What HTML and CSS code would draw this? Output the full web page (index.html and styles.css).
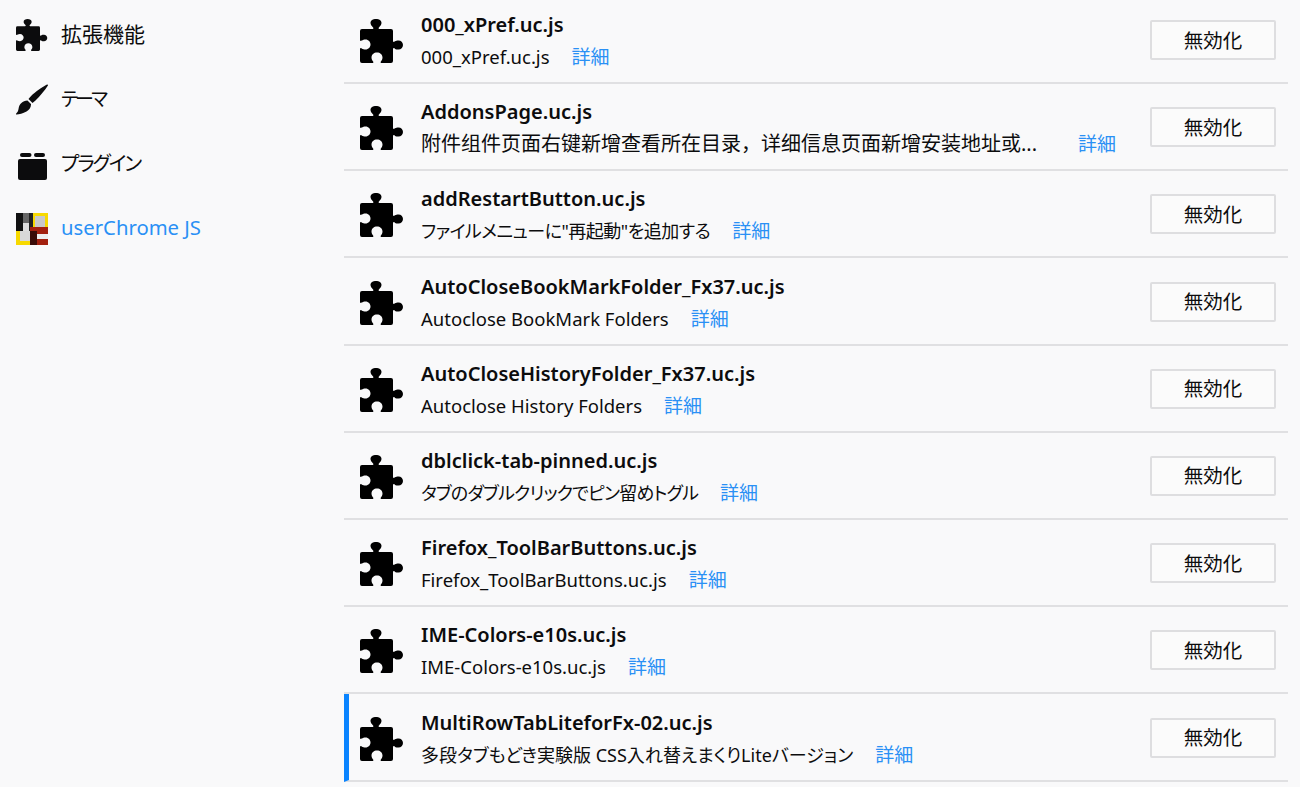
FILE: index.html
```html
<!DOCTYPE html>
<html lang="ja">
<head>
    <meta charset="UTF-8">
    <title>アドオンマネージャー</title>
    <link rel="stylesheet" href="styles.css">
</head>
<body>
    <svg class="defs" width="0" height="0">
        <symbol id="puzzle" viewBox="0 0 44 44">
            <path d="M2 10H12.500c.8 0 1.200-.8.6-1.600C11.500 7 10.500 5.500 10.500 3.800 10.500 1.500 13 0 16 0s5.500 1.500 5.500 3.800c0 1.700-1 3.200-2.600 4.600-.6.8-.2 1.600.6 1.600H31a2 2 0 0 1 2 2V22c0 .8.8 1.200 1.600.6 1.400-1.100 2.400-1.100 3.900-1.100 2.500 0 4.500 2 4.500 4.500s-2 4.500-4.500 4.500c-1.500 0-2.500 0-3.900-1.100-.8-.6-1.600-.2-1.600.6V42a2 2 0 0 1-2 2H21.500c-.8 0-1.200-.8-.6-1.600 1.100-1.400 1.600-2.400 1.600-3.900 0-3-2.500-5-5.500-5s-5.500 2-5.500 5c0 1.500.5 2.500 1.600 3.900.6.8.2 1.600-.6 1.600H2a2 2 0 0 1-2-2V30c0-.8.8-1.200 1.600-.6 1.400.6 2.400 1.100 3.900 1.100 3 0 5-2.500 5-5s-2-5-5-5c-1.500 0-2.500.5-3.900 1.100C.8 22.200 0 21.800 0 21V12a2 2 0 0 1 2-2Z"/>
        </symbol>
    </svg>

    <nav class="sidebar">
        <a class="cat">
            <svg class="cat-icon"><use href="#puzzle"/></svg>
            <span>拡張機能</span>
        </a>
        <a class="cat">
            <svg class="cat-icon" viewBox="0 0 32 32">
                <path d="M31 .5c.6-.4 1.300.3.900.9C29 6 24 12 19.500 16.500c-1 1-2 1.800-3 2.500l-4-4c.8-1 1.600-2 2.600-3C19.500 7.500 26.500 3 31 .5Z"/>
                <path d="M11.500 16.500l3.500 3.500c.2 3.500-2 6-4.500 7.500C7 29.500 3 30.500 .5 30.500c-.6 0-.7-.6-.3-1 1.800-1.500 2-3 2.500-5.500.6-3.500 3.800-7.500 8.800-7.500Z"/>
            </svg>
            <span class="kana kana-tight">テーマ</span>
        </a>
        <a class="cat">
            <svg class="cat-icon" viewBox="0 0 32 32">
                <rect x="4" y="5" width="11.500" height="4" rx="2"/>
                <rect x="18" y="5" width="11" height="4" rx="2"/>
                <rect x="2" y="11" width="29" height="21" rx="2"/>
            </svg>
            <span class="kana">プラグイン</span>
        </a>
        <a class="cat cat-active">
            <svg class="cat-icon" viewBox="0 0 32 32">
                <rect width="32" height="32" fill="#f7d900"/>
                <rect x="0" y="0" width="7" height="18" fill="#111"/>
                <rect x="7" y="0" width="6" height="10" fill="#666"/>
                <rect x="7" y="10" width="6" height="8" fill="#ddd"/>
                <rect x="13" y="0" width="4" height="24" fill="#222"/>
                <rect x="19" y="3" width="10" height="12" fill="#c9c9c9"/>
                <rect x="4" y="18" width="10" height="10" fill="#d8d8d8"/>
                <rect x="14" y="14" width="18" height="18" fill="#a3200f"/>
                <rect x="14" y="18" width="7" height="14" fill="#3a0c08"/>
                <rect x="21" y="21" width="11" height="5" fill="#eee"/>
            </svg>
            <span>userChrome JS</span>
        </a>
    </nav>

    <main class="list">
        <div class="addon">
            <svg class="addon-icon"><use href="#puzzle"/></svg>
            <div class="addon-body">
                <div class="addon-name">000_xPref.uc.js</div>
                <div class="addon-line"><span class="addon-desc">000_xPref.uc.js</span><a class="more">詳細</a></div>
            </div>
            <button class="btn">無効化</button>
        </div>
        <div class="addon">
            <svg class="addon-icon"><use href="#puzzle"/></svg>
            <div class="addon-body">
                <div class="addon-name">AddonsPage.uc.js</div>
                <div class="addon-line"><span class="addon-desc addon-desc-long">附件组件页面右键新增查看所在目录，详细信息页面新增安装地址或...</span><a class="more">詳細</a></div>
            </div>
            <button class="btn">無効化</button>
        </div>
        <div class="addon">
            <svg class="addon-icon"><use href="#puzzle"/></svg>
            <div class="addon-body">
                <div class="addon-name">addRestartButton.uc.js</div>
                <div class="addon-line"><span class="addon-desc kana">ファイルメニューに"再起動"を追加する</span><a class="more">詳細</a></div>
            </div>
            <button class="btn">無効化</button>
        </div>
        <div class="addon">
            <svg class="addon-icon"><use href="#puzzle"/></svg>
            <div class="addon-body">
                <div class="addon-name">AutoCloseBookMarkFolder_Fx37.uc.js</div>
                <div class="addon-line"><span class="addon-desc">Autoclose BookMark Folders</span><a class="more">詳細</a></div>
            </div>
            <button class="btn">無効化</button>
        </div>
        <div class="addon">
            <svg class="addon-icon"><use href="#puzzle"/></svg>
            <div class="addon-body">
                <div class="addon-name">AutoCloseHistoryFolder_Fx37.uc.js</div>
                <div class="addon-line"><span class="addon-desc">Autoclose History Folders</span><a class="more">詳細</a></div>
            </div>
            <button class="btn">無効化</button>
        </div>
        <div class="addon">
            <svg class="addon-icon"><use href="#puzzle"/></svg>
            <div class="addon-body">
                <div class="addon-name">dblclick-tab-pinned.uc.js</div>
                <div class="addon-line"><span class="addon-desc kana kana-tight">タブのダブルクリックでピン留めトグル</span><a class="more">詳細</a></div>
            </div>
            <button class="btn">無効化</button>
        </div>
        <div class="addon">
            <svg class="addon-icon"><use href="#puzzle"/></svg>
            <div class="addon-body">
                <div class="addon-name">Firefox_ToolBarButtons.uc.js</div>
                <div class="addon-line"><span class="addon-desc">Firefox_ToolBarButtons.uc.js</span><a class="more">詳細</a></div>
            </div>
            <button class="btn">無効化</button>
        </div>
        <div class="addon">
            <svg class="addon-icon"><use href="#puzzle"/></svg>
            <div class="addon-body">
                <div class="addon-name">IME-Colors-e10s.uc.js</div>
                <div class="addon-line"><span class="addon-desc">IME-Colors-e10s.uc.js</span><a class="more">詳細</a></div>
            </div>
            <button class="btn">無効化</button>
        </div>
        <div class="addon addon-selected">
            <svg class="addon-icon"><use href="#puzzle"/></svg>
            <div class="addon-body">
                <div class="addon-name">MultiRowTabLiteforFx-02.uc.js</div>
                <div class="addon-line"><span class="addon-desc kana kana-wide">多段タブもどき実験版 CSS入れ替えまくりLiteバージョン</span><a class="more">詳細</a></div>
            </div>
            <button class="btn">無効化</button>
        </div>
    </main>
</body>
</html>
```

FILE: styles.css
```css
html, body {
    height: 100%;
}
body {
    margin: 0;
    display: flex;
    overflow: hidden;
    background-color: #f9f9fa;
    color: #0c0c0d;
    font-family: "Noto Sans", "Noto Sans CJK JP", sans-serif;
}
.defs {
    position: absolute;
}
.kana {
    font-feature-settings: "palt";
}
.sidebar {
    width: 344px;
    flex: none;
    box-sizing: border-box;
    padding: 1px 0 0 16px;
}
.cat {
    display: flex;
    align-items: center;
    gap: 13px;
    height: 64.700px;
    font-size: 21px;
}
.cat .kana {
    font-size: 20px;
    letter-spacing: -2px;
}
.cat .kana-tight {
    font-size: 19px;
    letter-spacing: -3px;
}
.cat-icon {
    width: 32px;
    height: 32px;
    flex: none;
    fill: #0c0c0d;
    margin-top: 3px;
}
.cat-active {
    color: #2a90f5;
    font-size: 20.300px;
}
.list {
    width: 944px;
    flex: none;
    margin-top: -3.100px;
}
.addon {
    display: flex;
    align-items: center;
    height: 87.200px;
    box-sizing: border-box;
    padding: 0 12px 0 16px;
    border-bottom: 2px solid #e0e0e2;
}
.addon-selected {
    padding-left: 11px;
    border-left: 5px solid #0a84ff;
}
.addon-icon {
    width: 44px;
    height: 44px;
    flex: none;
    fill: #000;
    margin: 3px 17px 0 0;
}
.addon-body {
    flex: 1;
    min-width: 0;
    padding-top: 3px;
}
.addon-name {
    font-size: 20px;
    font-weight: 600;
    line-height: 28px;
    margin-bottom: 4px;
}
.addon-line {
    display: flex;
    line-height: 28px;
}
.addon-desc {
    white-space: nowrap;
    font-size: 18.500px;
}
.addon-desc.kana {
    font-size: 18px;
    letter-spacing: -0.500px;
}
.addon-desc.kana-tight {
    letter-spacing: -0.800px;
}
.addon-desc.kana-wide {
    letter-spacing: 0;
}
.addon-desc-long {
    width: 635px;
    font-size: 20px;
}
.more {
    margin-left: 22px;
    color: #2a90f5;
    font-size: 19px;
    flex: none;
}
.btn {
    width: 126px;
    height: 40px;
    flex: none;
    padding: 0 0 2px;
    background-color: #fbfbfb;
    border: 2px solid #dedee0;
    border-radius: 2px;
    color: #0c0c0d;
    font-family: inherit;
    font-size: 19.500px;
    margin-top: 1px;
}
```
